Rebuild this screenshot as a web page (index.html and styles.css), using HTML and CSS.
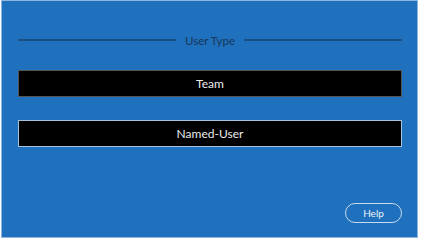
FILE: index.html
```html
<!DOCTYPE html>
<html lang="en">
<head>
    <meta charset="UTF-8">
    <meta name="viewport" content="width=device-width, initial-scale=1.0">
    <title>User Type</title>
    <link rel="stylesheet" href="styles.css">
</head>
<body>

<div class="panel">
    <div class="legend">
        <span class="legend-line"></span>
        <span class="legend-text">User Type</span>
        <span class="legend-line"></span>
    </div>
    <button class="choice">Team</button>
    <button class="choice selected">Named-User</button>
    <div class="footer">
        <button class="help-button">Help</button>
    </div>
</div>

</body>
</html>
```

FILE: styles.css
```css
body {
    font-family: Lato, "Liberation Sans", sans-serif;
    margin: 0;
    padding: 0;
    background-color: #fff;
}
.panel {
    box-sizing: border-box;
    width: 417px;
    height: 238px;
    margin-left: 1px;
    border: 1px solid #8fb6de;
    background-color: #1f70bd;
    padding: 30px 15px 14px 16px;
    display: flex;
    flex-direction: column;
}
.legend {
    display: flex;
    align-items: center;
    gap: 9px;
    height: 18px;
}
.legend-line {
    flex: 1;
    height: 2px;
    background-color: #1a4f84;
}
.legend-text {
    color: #18375a;
    font-size: 11.5px;
}
.choice {
    height: 27px;
    background-color: #000;
    color: #ececec;
    border: 1px solid #555;
    font-family: inherit;
    font-size: 12px;
    padding: 0;
    margin-top: 21px;
}
.choice.selected {
    border-color: #a8c2dc;
    margin-top: 23px;
}
.footer {
    margin-top: auto;
    display: flex;
    justify-content: flex-end;
}
.help-button {
    width: 57px;
    height: 20px;
    border: 1px solid #c6dbf0;
    border-radius: 10px;
    background-color: transparent;
    color: #f0f4f8;
    font-family: inherit;
    font-size: 10px;
    padding: 0;
}
```
